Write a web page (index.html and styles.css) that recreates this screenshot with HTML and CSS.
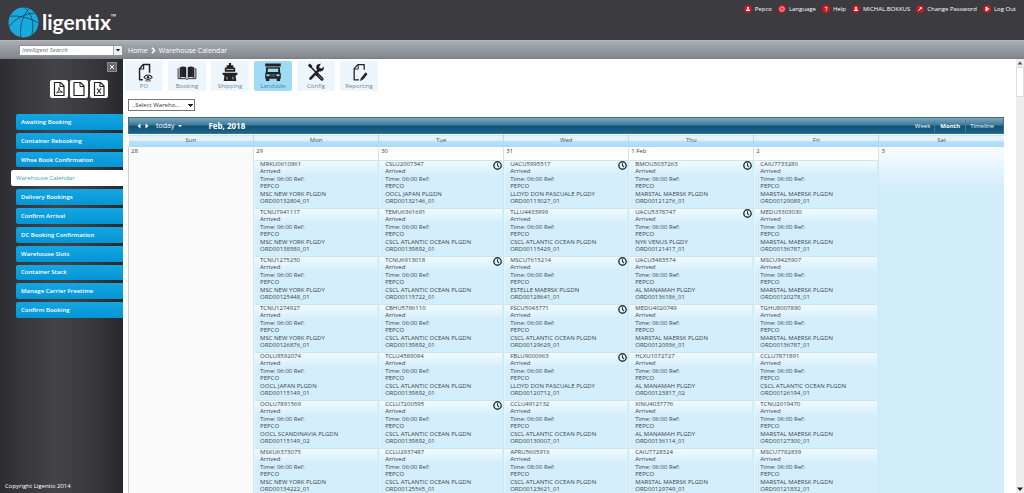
FILE: index.html
```
<!DOCTYPE html>
<html lang="en">
<head>
<meta charset="utf-8">
<title>Ligentix - Warehouse Calendar</title>
<link rel="stylesheet" href="styles.css">
</head>
<body>
<svg class="sprite" aria-hidden="true">
  <symbol id="clock" viewBox="0 0 18 18"><circle cx="9" cy="9" r="7.4" fill="none" stroke="#24343c" stroke-width="2.8"/><path d="M9 4.5V9.2L11.8 12" fill="none" stroke="#24343c" stroke-width="2.2"/></symbol>
  <symbol id="person" viewBox="0 0 16 16"><circle cx="8" cy="8" r="8" fill="#c9151e"/><circle cx="8" cy="5.8" r="2.2" fill="#fff"/><path d="M3.8 12c.2-3 2-3.6 4.200-3.600s4 .6 4.200 3.600z" fill="#fff"/></symbol>
</svg>

<header class="top">
  <a class="logo" href="#" aria-label="ligentix home">
    <svg class="globe" viewBox="0 0 60 60" aria-hidden="true"><circle cx="30" cy="30" r="29" fill="#1aa9df"/><g fill="none" stroke="#17506d" stroke-width="1.800"><path d="M5 18C20 16 38 20 58 30"/><path d="M2 38C12 24 32 12 52 12"/><path d="M41 3C28 16 22 38 25 58"/><path d="M32 1C46 12 52 34 46 54"/></g></svg>
    <span class="logo-name">ligentix</span><sup class="tm">™</sup>
  </a>
  <nav class="user-links" aria-label="Account">
    <a href="#"><svg viewBox="0 0 16 16"><use href="#person"/></svg>Pepco</a>
    <a href="#"><svg viewBox="0 0 16 16"><circle cx="8" cy="8" r="8" fill="#c9151e"/><circle cx="8" cy="8" r="4.600" fill="none" stroke="#f6c9cb" stroke-width="1.800"/><path d="M4 8h8M8 4v8" stroke="#e98a8e" stroke-width="1"/></svg>Language</a>
    <a href="#"><svg viewBox="0 0 16 16"><circle cx="8" cy="8" r="8" fill="#c9151e"/><path d="M5.800 6.300c0-3 4.600-3 4.600-.2 0 1.800-2.300 1.700-2.300 3.600M8.100 11v1.800" fill="none" stroke="#fff" stroke-width="1.700"/></svg>Help</a>
    <a href="#"><svg viewBox="0 0 16 16"><use href="#person"/></svg>MICHAL.BOKKUS</a>
    <a href="#"><svg viewBox="0 0 16 16"><circle cx="8" cy="8" r="8" fill="#c9151e"/><circle cx="9.600" cy="6.200" r="2.400" fill="#fff"/><path d="M8.500 7.500L4.500 11.800" stroke="#fff" stroke-width="2"/></svg>Change Password</a>
    <a href="#"><svg viewBox="0 0 16 16"><circle cx="8" cy="8" r="8" fill="#c9151e"/><path d="M5 3.800h4v8.400H5z" fill="#fff"/><path d="M8 8h4.200M10.500 6l2 2-2 2" fill="none" stroke="#fff" stroke-width="1.300"/></svg>Log Out</a>
  </nav>
</header>

<div class="crumb-bar">
  <form class="search">
    <input type="text" aria-label="Intelligent Search" placeholder="Intelligent Search">
    <button type="button" aria-label="Search options"><svg viewBox="0 0 8 8"><path d="M1 2.500h6L4 6z" fill="#222"/></svg></button>
  </form>
  <nav class="crumbs" aria-label="Breadcrumb">
    <a href="#">Home</a>
    <svg viewBox="0 0 10 14"><path d="M2 1.500l5 5.500-5 5.500" fill="none" stroke="#fff" stroke-width="3"/></svg>
    <a href="#">Warehouse Calendar</a>
  </nav>
</div>

<div class="shell">
  <aside class="side">
    <button class="close" type="button" aria-label="Close panel"><svg viewBox="0 0 16 16"><path d="M4 4l8 8M12 4l-8 8" stroke="#fff" stroke-width="2"/></svg></button>
    <div class="exports">
      <button type="button" aria-label="Export PDF"><svg viewBox="0 0 36 36"><path d="M9 5h12l7 7v19H9z" fill="none" stroke="#222" stroke-width="2.400" stroke-linejoin="round"/><path d="M20 5v8h8" fill="none" stroke="#222" stroke-width="2"/><path d="M13 26c3-2 6-7 5-11 0 5 3 9 7 9-4 0-9 0-12 2z" fill="none" stroke="#222" stroke-width="1.800"/></svg></button>
      <button type="button" aria-label="Export document"><svg viewBox="0 0 36 36"><path d="M8 5h13l7 7v19H8z" fill="none" stroke="#222" stroke-width="2.400" stroke-linejoin="round"/><path d="M20 5v8h8" fill="none" stroke="#222" stroke-width="2"/></svg></button>
      <button type="button" aria-label="Export Excel"><svg viewBox="0 0 36 36"><path d="M9 5h12l7 7v19H9z" fill="none" stroke="#222" stroke-width="2.400" stroke-linejoin="round"/><path d="M20 5v8h8M14 17l8 10M22 17l-8 10" fill="none" stroke="#222" stroke-width="2.200"/></svg></button>
    </div>
    <nav class="menu" aria-label="Landside">
      <a href="#">Awaiting Booking</a>
      <a href="#">Container Rebooking</a>
      <a href="#">Whse Book Confirmation</a>
      <a href="#" class="active" aria-current="page">Warehouse Calendar</a>
      <a href="#">Delivery Bookings</a>
      <a href="#">Confirm Arrival</a>
      <a href="#">DC Booking Confirmation</a>
      <a href="#">Warehouse Slots</a>
      <a href="#">Container Stack</a>
      <a href="#">Manage Carrier Freetime</a>
      <a href="#">Confirm Booking</a>
    </nav>
    <footer class="copyright">Copyright Ligentix 2014</footer>
  </aside>

  <main class="main">
    <nav class="modules" aria-label="Modules">
      <a href="#"><svg viewBox="0 0 54 54"><path d="M24 48H15V18L25 7h17v22" fill="none" stroke="#222" stroke-width="4" stroke-linejoin="round"/><path d="M15 19h11V7" fill="none" stroke="#222" stroke-width="3"/><path d="M27 41c5-8 17-8 22 0-5 8-17 8-22 0z" fill="#eef6fd" stroke="#222" stroke-width="3"/><circle cx="38" cy="41" r="3.500" fill="#222"/><path d="M30 51h16" stroke="#222" stroke-width="2"/></svg>PO</a>
      <a href="#"><svg viewBox="0 0 54 54"><path d="M7 15c7-4 14-4 18 0v28c-5-3-11-3-18 0zM47 15c-7-4-14-4-18 0v28c5-3 11-3 18 0z" fill="#222"/><path d="M3 17v28h20l4 2 4-2h20V17" fill="none" stroke="#222" stroke-width="2.500"/><path d="M13 14v26M41 14v26" stroke="#667" stroke-width="1"/></svg>Booking</a>
      <a href="#"><svg viewBox="0 0 54 54"><path d="M24 3h6v6h6v6h5v11H13V15h5V9h6z" fill="#222"/><path d="M7 29h40v5l-5 3 2 14H10l2-14-5-3z" fill="#222"/><path d="M17 20h20M19 40v7M35 40v7" stroke="#eef6fd" stroke-width="2"/></svg>Shipping</a>
      <a href="#" class="on"><svg viewBox="0 0 54 54"><path d="M6 4h42v8H6zM8 14h38v13l2 5v13H6V32l2-5z" fill="#222"/><path d="M13 18h28v9H13z" fill="#9edcf5"/><path d="M10 34h7v4h-7zM37 34h7v4h-7zM20 34h14M20 38h14" fill="#9edcf5" stroke="#9edcf5"/><path d="M8 44h9v7H8zM37 44h9v7h-9z" fill="#222"/></svg>Landside</a>
      <a href="#"><svg viewBox="0 0 54 54"><path d="M12 45L37 19" stroke="#222" stroke-width="7" stroke-linecap="round"/><path d="M48 13l-8 6-5-5 5-9c-10-1-15 7-11 15l6 5c9 3 15-4 13-12z" fill="#222"/><path d="M9 9l18 19" stroke="#222" stroke-width="4"/><path d="M5 9l5-5 7 6-1 5-5 1z" fill="#222"/><path d="M30 33l13 13" stroke="#222" stroke-width="9" stroke-linecap="round"/><path d="M33 36l10 10" stroke="#bcc6ce" stroke-width="1.500"/></svg>Config</a>
      <a href="#"><svg viewBox="0 0 54 54"><path d="M27 48H14V18L24 7h17v14M41 41v3" fill="none" stroke="#222" stroke-width="3.500" stroke-linejoin="round"/><path d="M14 19h11V7" fill="none" stroke="#222" stroke-width="2.500"/><path d="M32 44l13-16 5 5-13 15-7 3z" fill="#222"/></svg>Reporting</a>
    </nav>

    <select class="warehouse" aria-label="Warehouse"><option>..Select Wareho...</option></select>

    <section class="calendar" aria-label="Calendar">
      <div class="cal-bar">
        <button type="button" aria-label="Previous"><svg viewBox="0 0 8 10"><path d="M7 0v10L1 5z" fill="#fff"/></svg></button>
        <button type="button" aria-label="Next"><svg viewBox="0 0 8 10"><path d="M1 0v10l6-5z" fill="#fff"/></svg></button>
        <button type="button" class="today">today <svg viewBox="0 0 8 8"><path d="M0 2h8L4 6.500z" fill="#fff"/></svg></button>
        <h1>Feb, 2018</h1>
        <div class="views">
          <button type="button">Week</button>
          <button type="button" class="current">Month</button>
          <button type="button">Timeline</button>
        </div>
      </div>
      <table>
        <thead>
          <tr><th scope="col">Sun</th><th scope="col">Mon</th><th scope="col">Tue</th><th scope="col">Wed</th><th scope="col">Thu</th><th scope="col">Fri</th><th scope="col">Sat</th></tr>
        </thead>
        <tbody>
          <tr>
            <td class="empty"><div class="date">28</div></td>
            <td><div class="date">29</div>
              <article>MRKU0610861<br>Arrived<br>Time: 06:00 Ref:<br>PEPCO<br>MSC NEW YORK PLGDN<br>ORD00132804_01</article>
              <article>TCNU7941117<br>Arrived<br>Time: 06:00 Ref:<br>PEPCO<br>MSC NEW YORK PLGDY<br>ORD00138580_01</article>
              <article>TCNU1275250<br>Arrived<br>Time: 06:00 Ref:<br>PEPCO<br>MSC NEW YORK PLGDY<br>ORD00125448_01</article>
              <article>TCNU1274927<br>Arrived<br>Time: 06:00 Ref:<br>PEPCO<br>MSC NEW YORK PLGDY<br>ORD00126876_01</article>
              <article>OOLU8592074<br>Arrived<br>Time: 06:00 Ref:<br>PEPCO<br>OOCL JAPAN PLGDN<br>ORD00115149_01</article>
              <article>OOLU7891569<br>Arrived<br>Time: 06:00 Ref:<br>PEPCO<br>OOCL SCANDINAVIA PLGDN<br>ORD00115149_02</article>
              <article>MSKU6373075<br>Arrived<br>Time: 06:00 Ref:<br>PEPCO<br>MSC NEW YORK PLGDN<br>ORD00134222_01</article>
            </td>
            <td><div class="date">30</div>
              <article>CSLU2007347<br>Arrived<br>Time: 06:00 Ref:<br>PEPCO<br>OOCL JAPAN PLGDN<br>ORD00132146_01<svg class="clock"><use href="#clock"/></svg></article>
              <article>TEMU6361691<br>Arrived<br>Time: 06:00 Ref:<br>PEPCO<br>CSCL ATLANTIC OCEAN PLGDN<br>ORD00139892_01</article>
              <article>TCNU6913018<br>Arrived<br>Time: 06:00 Ref:<br>PEPCO<br>CSCL ATLANTIC OCEAN PLGDN<br>ORD00115722_01<svg class="clock"><use href="#clock"/></svg></article>
              <article>CBHU5786110<br>Arrived<br>Time: 06:00 Ref:<br>PEPCO<br>CSCL ATLANTIC OCEAN PLGDN<br>ORD00139892_01</article>
              <article>TCLU4589094<br>Arrived<br>Time: 06:00 Ref:<br>PEPCO<br>CSCL ATLANTIC OCEAN PLGDN<br>ORD00139892_01</article>
              <article>CCLU7200595<br>Arrived<br>Time: 06:00 Ref:<br>PEPCO<br>CSCL ATLANTIC OCEAN PLGDN<br>ORD00139892_01<svg class="clock"><use href="#clock"/></svg></article>
              <article>CCLU2937487<br>Arrived<br>Time: 06:00 Ref:<br>PEPCO<br>CSCL ATLANTIC OCEAN PLGDN<br>ORD00125565_01</article>
            </td>
            <td><div class="date">31</div>
              <article>UACU5995517<br>Arrived<br>Time: 06:00 Ref:<br>PEPCO<br>LLOYD DON PASCUALE PLGDY<br>ORD00113027_01<svg class="clock"><use href="#clock"/></svg></article>
              <article>TLLU4433999<br>Arrived<br>Time: 06:00 Ref:<br>PEPCO<br>CSCL ATLANTIC OCEAN PLGDN<br>ORD00115429_01</article>
              <article>MSCU7615214<br>Arrived<br>Time: 06:00 Ref:<br>PEPCO<br>ESTELLE MAERSK PLGDN<br>ORD00128641_01<svg class="clock"><use href="#clock"/></svg></article>
              <article>FSCU5043771<br>Arrived<br>Time: 06:00 Ref:<br>PEPCO<br>CSCL ATLANTIC OCEAN PLGDN<br>ORD00129629_01<svg class="clock"><use href="#clock"/></svg></article>
              <article>FBLU9000663<br>Arrived<br>Time: 06:00 Ref:<br>PEPCO<br>LLOYD DON PASCUALE PLGDY<br>ORD00120712_01<svg class="clock"><use href="#clock"/></svg></article>
              <article>CCLU4912132<br>Arrived<br>Time: 06:00 Ref:<br>PEPCO<br>CSCL ATLANTIC OCEAN PLGDN<br>ORD00130007_01</article>
              <article>APRU5605916<br>Arrived<br>Time: 08:00 Ref:<br>PEPCO<br>CSCL ATLANTIC OCEAN PLGDN<br>ORD00123621_01</article>
            </td>
            <td><div class="date">1 Feb</div>
              <article>BMOU3037263<br>Arrived<br>Time: 06:00 Ref:<br>PEPCO<br>MARSTAL MAERSK PLGDN<br>ORD00121276_01<svg class="clock"><use href="#clock"/></svg></article>
              <article>UACU5378747<br>Arrived<br>Time: 06:00 Ref:<br>PEPCO<br>NYK VENUS PLGDY<br>ORD00121417_01<svg class="clock"><use href="#clock"/></svg></article>
              <article>UACU3483574<br>Arrived<br>Time: 06:00 Ref:<br>PEPCO<br>AL MANAMAH PLGDY<br>ORD00136186_01</article>
              <article>MEDU4020749<br>Arrived<br>Time: 06:00 Ref:<br>PEPCO<br>MARSTAL MAERSK PLGDN<br>ORD00120936_01</article>
              <article>HLXU1072727<br>Arrived<br>Time: 06:00 Ref:<br>PEPCO<br>AL MANAMAH PLGDY<br>ORD00123817_02</article>
              <article>XINU4037776<br>Arrived<br>Time: 06:00 Ref:<br>PEPCO<br>AL MANAMAH PLGDY<br>ORD00136114_01</article>
              <article>CAIU7728324<br>Arrived<br>Time: 06:00 Ref:<br>PEPCO<br>MARSTAL MAERSK PLGDN<br>ORD00129749_01</article>
            </td>
            <td><div class="date">2</div>
              <article>CAIU7733280<br>Arrived<br>Time: 06:00 Ref:<br>PEPCO<br>MARSTAL MAERSK PLGDN<br>ORD00129089_01</article>
              <article>MEDU3303030<br>Arrived<br>Time: 06:00 Ref:<br>PEPCO<br>MARSTAL MAERSK PLGDN<br>ORD00136787_01</article>
              <article>MSCU9425907<br>Arrived<br>Time: 06:00 Ref:<br>PEPCO<br>MARSTAL MAERSK PLGDN<br>ORD00120278_01</article>
              <article>TGHU8007890<br>Arrived<br>Time: 06:00 Ref:<br>PEPCO<br>MARSTAL MAERSK PLGDN<br>ORD00136787_01</article>
              <article>CCLU7871891<br>Arrived<br>Time: 06:00 Ref:<br>PEPCO<br>CSCL ATLANTIC OCEAN PLGDN<br>ORD00126194_01</article>
              <article>TCNU2019470<br>Arrived<br>Time: 06:00 Ref:<br>PEPCO<br>MARSTAL MAERSK PLGDN<br>ORD00127300_01</article>
              <article>MSCU7782839<br>Arrived<br>Time: 06:00 Ref:<br>PEPCO<br>MARSTAL MAERSK PLGDN<br>ORD00121832_01</article>
            </td>
            <td class="sat"><div class="date">3</div></td>
          </tr>
        </tbody>
      </table>
    </section>
  </main>

  <div class="scroll" aria-hidden="true">
    <svg viewBox="0 0 8 8"><path d="M1.500 5.500h5L4 2.500z" fill="#555"/></svg>
    <span class="thumb"></span>
    <svg class="down" viewBox="0 0 8 8"><path d="M1 2.500h6L4 6z" fill="#222"/></svg>
  </div>
</div>
</body>
</html>
```
FILE: styles.css
```
* { box-sizing: border-box; }

body {
  margin: 0;
  height: 100vh;
  overflow: hidden;
  display: flex;
  flex-direction: column;
  background: #fff;
  color: #3c4448;
  font-family: "Open Sans", "Noto Sans", sans-serif;
  font-size: 6px;
}

a { color: inherit; text-decoration: none; }
svg { display: block; flex: none; }
button, input, select { font: inherit; color: inherit; margin: 0; }
button { border: 0; padding: 0; background: none; }
.sprite { display: none; }

.top {
  flex: none;
  height: 40px;
  display: flex;
  justify-content: space-between;
  align-items: flex-start;
  padding: 0 8px;
  background: #3c3b3f;
  color: #fff;
}
.logo { display: flex; padding-top: 7px; }
.globe { width: 31px; height: 31px; }
.logo-name {
  margin-left: 3px;
  font: 700 21px/30px Lato, sans-serif;
}
.tm { font-size: 7px; line-height: 20px; }

.user-links { display: flex; gap: 6px; padding-top: 4px; line-height: 10px; }
.user-links a { display: flex; align-items: center; gap: 3px; }
.user-links svg { width: 8px; height: 8px; }

.crumb-bar {
  flex: none;
  height: 19px;
  display: flex;
  align-items: center;
  padding-left: 19px;
  background: linear-gradient(#a7adb2, #858a92 88%, #777b82);
  border-top: 1px solid #b5b9bd;
}
.search { display: flex; width: 104px; height: 11px; background: #fff; border: 1px solid #8e9298; }
.search input {
  flex: 1;
  min-width: 0;
  padding: 0 2px;
  border: 0;
  background: none;
  outline: 0;
  font-style: italic;
}
.search input::placeholder { color: #666; opacity: 1; }
.search button { width: 9px; border-left: 1px solid #aaa; background: #eee; }
.search button svg { width: 6px; height: 6px; margin: 0 auto; }
.crumbs { display: flex; align-items: center; gap: 3px; margin-left: 5px; color: #fff; font-size: 7px; }
.crumbs svg { width: 5px; height: 7px; }

.shell { flex: 1; min-height: 0; display: flex; }

.side {
  flex: none;
  width: 123px;
  display: flex;
  flex-direction: column;
  background: linear-gradient(90deg, #2e2d31, #444347 45%, #3b3a3e 70%, #29282c);
}
.close {
  align-self: flex-end;
  width: 8px;
  height: 8px;
  margin: 4px 7px 0 0;
  background: #68676c;
  outline: 1px solid #8c8b90;
}
.exports { display: flex; justify-content: flex-end; gap: 2px; padding: 9px 15px 0 0; }
.exports button { width: 18px; height: 18px; border-radius: 2px; background: #fff; }
.exports svg { width: 18px; height: 18px; }

.menu { display: flex; flex-direction: column; gap: 3px; height: 204px; margin-top: 16px; padding-left: 16px; }
.menu a {
  flex: 1;
  display: flex;
  align-items: center;
  padding-left: 5px;
  border-radius: 2px 0 0 2px;
  background: linear-gradient(#14a6e2, #0595d5);
  color: #fff;
  font-weight: 600;
}
.menu .active { margin-left: -5px; background: #fff; color: #3a9fb8; font-weight: 400; }
.copyright { margin-top: auto; padding: 0 5px 2px; color: #fff; line-height: 9px; }

.main { flex: 1; min-width: 0; padding: 2px 12px 0 5px; }
.modules { display: flex; gap: 5px; margin-left: -3px; }
.modules a {
  width: 38px;
  height: 30px;
  display: flex;
  flex-direction: column;
  align-items: center;
  background: #eef6fd;
  color: #76838c;
  line-height: 9px;
}
.modules svg { width: 20px; height: 20px; margin-top: 1px; }
.modules .on { background: #9edcf5; border-radius: 2px; color: #55849a; }

.warehouse {
  display: block;
  appearance: none;
  width: 67px;
  height: 12px;
  margin-top: 8px;
  padding: 0 3px;
  border: 1px solid #777;
  border-radius: 0;
  color: #333;
  background: linear-gradient(#222, #222) 59px 4px / 5px 1px no-repeat, linear-gradient(#222, #222) 60px 5px / 3px 1px no-repeat, linear-gradient(#222, #222) 61px 6px / 1px 1px no-repeat, #fff;
}

.calendar { margin-top: 6px; }
.cal-bar {
  height: 17px;
  display: flex;
  align-items: center;
  padding: 0 5px 0 8px;
  border: 1px solid #3d6f8a;
  background: linear-gradient(#80a8bd, #3f7c9a 45%, #0f5376 55%, #1a648a);
  color: #fff;
  font-size: 7px;
}
.cal-bar button + button { margin-left: 4px; }
.cal-bar > button > svg { width: 4px; height: 6px; }
.cal-bar .today { display: flex; align-items: center; gap: 4px; margin-left: 7px; }
.cal-bar .today svg { width: 4px; height: 4px; }
.cal-bar h1 { margin: 0 0 0 26px; font-size: 8px; font-weight: 700; }
.views { display: flex; margin-left: auto; font-size: 6px; }
.cal-bar .views button { margin: 0; padding: 0 4px; line-height: 12px; }
.cal-bar .views .current { padding: 0 5px; border: solid #44809e; border-width: 0 1px; font-weight: 700; }

table { width: 100%; table-layout: fixed; border-collapse: collapse; }
th {
  height: 12px;
  padding: 0;
  border-top: 1px solid #fff;
  border-right: 1px solid #b5dcf0;
  background: linear-gradient(#e4f4fd 40%, #b9e1f6 50%, #a8daf5);
  color: #46555e;
  font-weight: 400;
  line-height: 11px;
}
td {
  height: 347px;
  padding: 0;
  vertical-align: top;
  background: #d6f0fb;
  border-right: 1px solid #c9e7f4;
}
td:last-child, th:last-child { border-right: 0; }
.date { height: 13px; padding: 0 2px; background: #fff; line-height: 8px; }
.empty { background: #fafafa; border-left: 1px solid #ccc; }
.empty .date { background: none; }
.sat { background: linear-gradient(#fafdff, #d3eefb 40px); }
.sat .date { background: none; }

article {
  position: relative;
  height: 48px;
  margin: 0 1px 0 0;
  padding: 0 0 0 5px;
  border-left: 1px solid #e8f6fc;
  border-top: 1px solid #c9e6f3;
  background: linear-gradient(#f1f9fd, #e6f5fc 6px, #d4effb 14px);
  line-height: 1.25;
  white-space: nowrap;
}
.clock { position: absolute; top: 0; right: 0; width: 9px; height: 9px; }

.scroll { flex: none; width: 8px; display: flex; flex-direction: column; background: #ededed; }
.scroll svg { width: 8px; height: 8px; }
.thumb { height: 30px; background: #fff; border: 1px solid #ddd; }
.scroll .down { margin-top: auto; }
```
